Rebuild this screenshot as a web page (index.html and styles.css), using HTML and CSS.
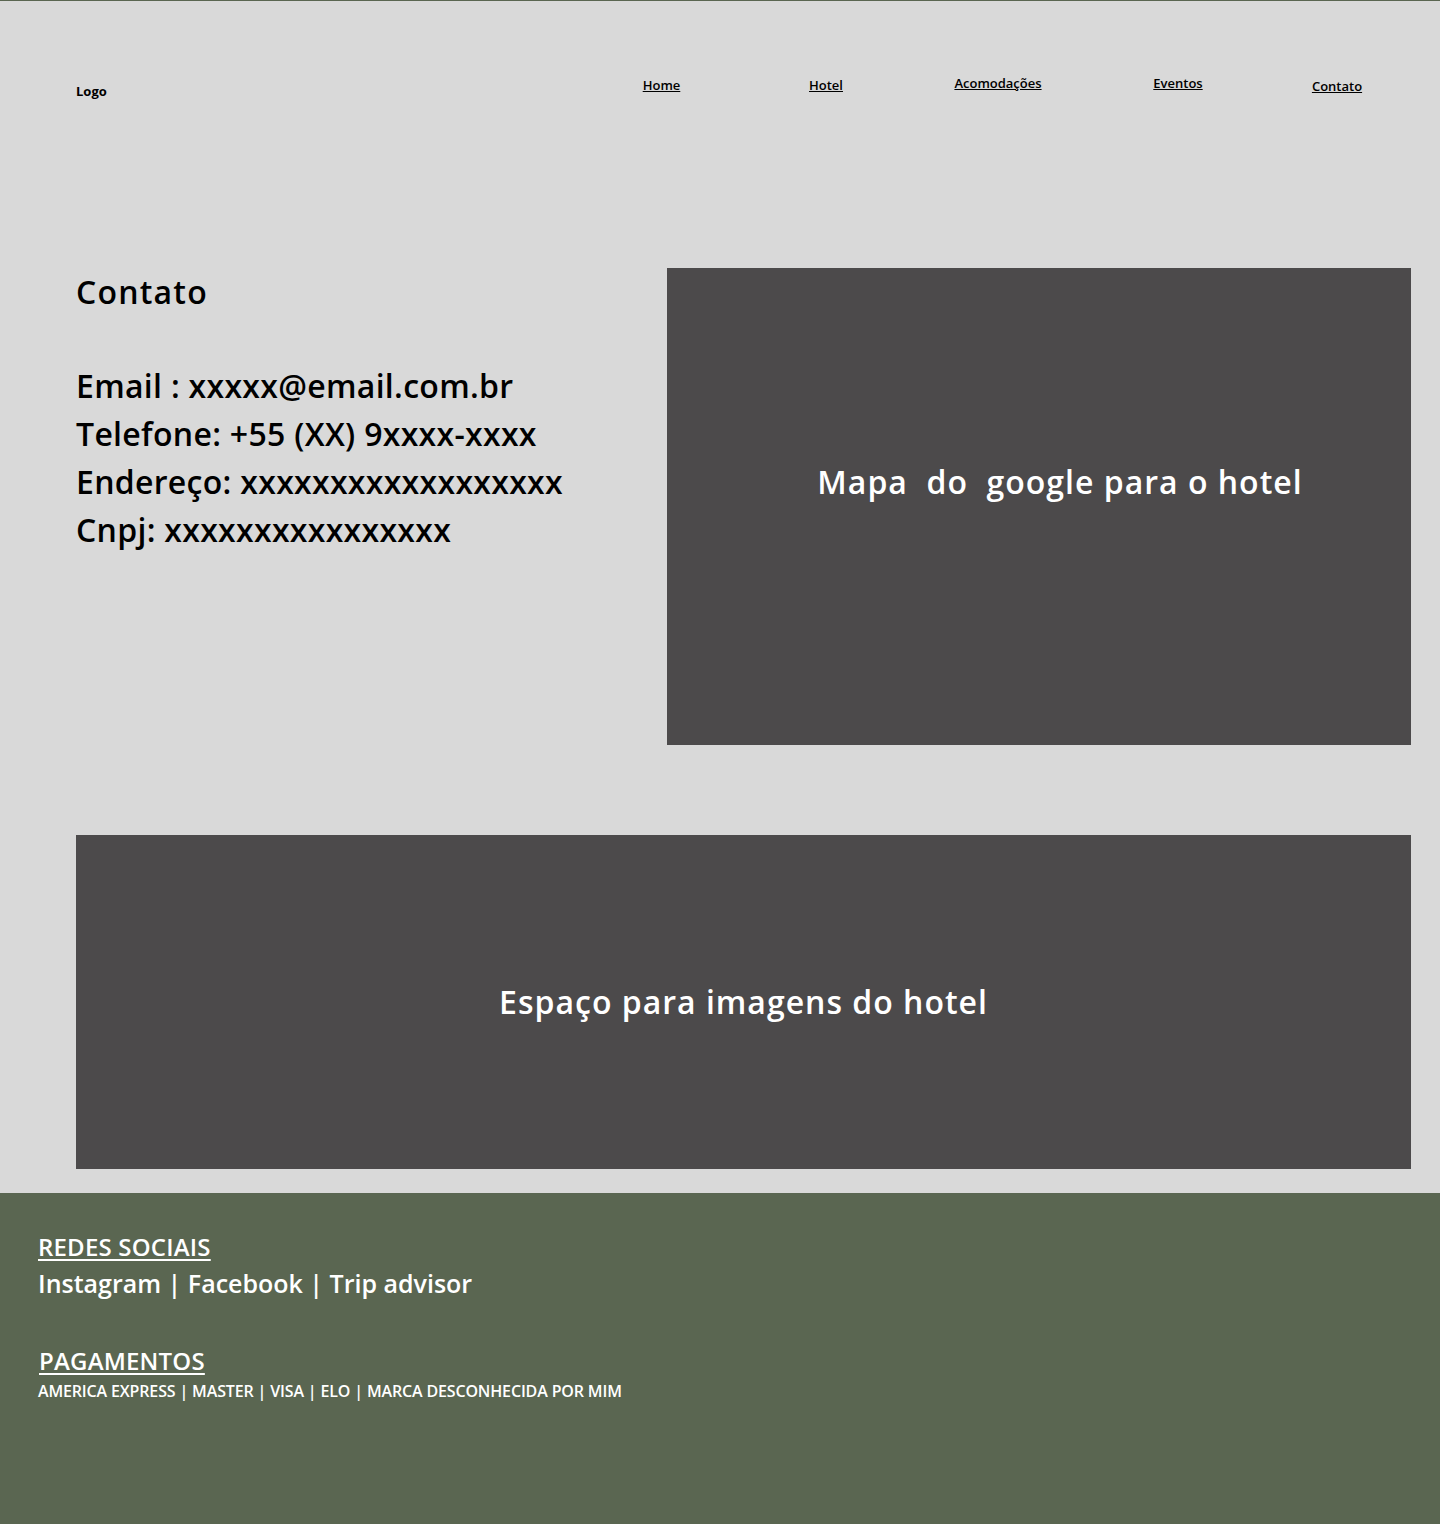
FILE: index.html
```html
<!DOCTYPE html>
<html lang="pt-BR">
<head>
<meta charset="utf-8">
<title>Contato</title>
<link rel="stylesheet" href="styles.css">
</head>
<body>
<header class="top">
  <div class="logo">Logo</div>
  <nav class="nav">
    <a class="nav-link" href="#">Home</a>
    <a class="nav-link" href="#">Hotel</a>
    <a class="nav-link nav-up" href="#">Acomodações</a>
    <a class="nav-link nav-up" href="#">Eventos</a>
    <a class="nav-link nav-down" href="#">Contato</a>
  </nav>
</header>
<main class="main">
  <section class="contact-row">
    <div class="contact">
      <h1 class="contact-title">Contato</h1>
      <p class="contact-info">Email : xxxxx@email.com.br<br>Telefone: +55 (XX) 9xxxx-xxxx<br>Endereço: xxxxxxxxxxxxxxxxxx<br>Cnpj: xxxxxxxxxxxxxxxx</p>
    </div>
    <div class="map"><span class="map-label">Mapa&nbsp; do&nbsp; google para o hotel</span></div>
  </section>
  <section class="gallery"><span class="gallery-label">Espaço para imagens do hotel</span></section>
</main>
<footer class="footer">
  <h2 class="foot-title">REDES SOCIAIS</h2>
  <p class="foot-social">Instagram | Facebook | Trip advisor</p>
  <h2 class="foot-title foot-pay">PAGAMENTOS</h2>
  <p class="foot-cards">AMERICA EXPRESS | MASTER | VISA | ELO | MARCA DESCONHECIDA POR MIM</p>
</footer>
</body>
</html>
```
FILE: styles.css
```css
* { box-sizing: border-box; }
html, body { margin: 0; padding: 0; }
body {
  background: #d9d9d9;
  border-top: 1px solid #5a6651;
  font-family: "Open Sans", "Liberation Sans", sans-serif;
  color: #000;
}
.top {
  height: 267px;
  display: flex;
  align-items: flex-start;
  padding: 74px 0 0 76px;
}
.logo {
  font-size: 13px;
  font-weight: 700;
  margin-top: 7px;
  width: 504px;
}
.nav {
  display: grid;
  grid-template-columns: 163px 166px 178px 182px 136px;
  justify-items: center;
}
.nav-link {
  font-size: 13px;
  font-weight: 600;
  color: #000;
  text-decoration: underline;
  margin-top: 1px;
}
.nav-up { margin-top: -1px; }
.nav-down { margin-top: 2px; }
.main {
  padding: 0 29px 0 76px;
}
.contact-row {
  display: flex;
}
.contact {
  flex: 1;
}
.contact-title {
  margin: 0;
  font-size: 32px;
  font-weight: 600;
  line-height: 48px;
  letter-spacing: 1.2px;
}
.contact-info {
  margin: 46px 0 0;
  font-size: 32px;
  font-weight: 600;
  line-height: 48px;
  letter-spacing: 0.3px;
}
.map {
  width: 744px;
  height: 477px;
  background: #4c4a4b;
  display: flex;
  justify-content: center;
  padding: 190px 0 0 42px;
}
.map-label, .gallery-label {
  color: #fff;
  font-size: 32px;
  font-weight: 600;
  line-height: 48px;
  letter-spacing: 1px;
}
.gallery {
  margin-top: 90px;
  height: 334px;
  background: #4c4a4b;
  display: flex;
  align-items: center;
  justify-content: center;
}
.footer {
  margin-top: 24px;
  height: 331px;
  background: #5a6651;
  color: #fff;
  padding: 36px 0 0 38px;
}
.foot-title {
  margin: 0;
  font-size: 24px;
  font-weight: 600;
  line-height: 36px;
  text-decoration: underline;
  text-decoration-thickness: 2px;
  text-underline-offset: 3px;
  letter-spacing: 0.2px;
}
.foot-social {
  margin: 0;
  font-size: 25px;
  font-weight: 600;
  line-height: 36px;
}
.foot-pay {
  margin-top: 42px;
  padding-left: 1px;
}
.foot-cards {
  margin: 0;
  font-size: 16px;
  font-weight: 600;
  line-height: 24px;
  letter-spacing: -0.15px;
}
```
